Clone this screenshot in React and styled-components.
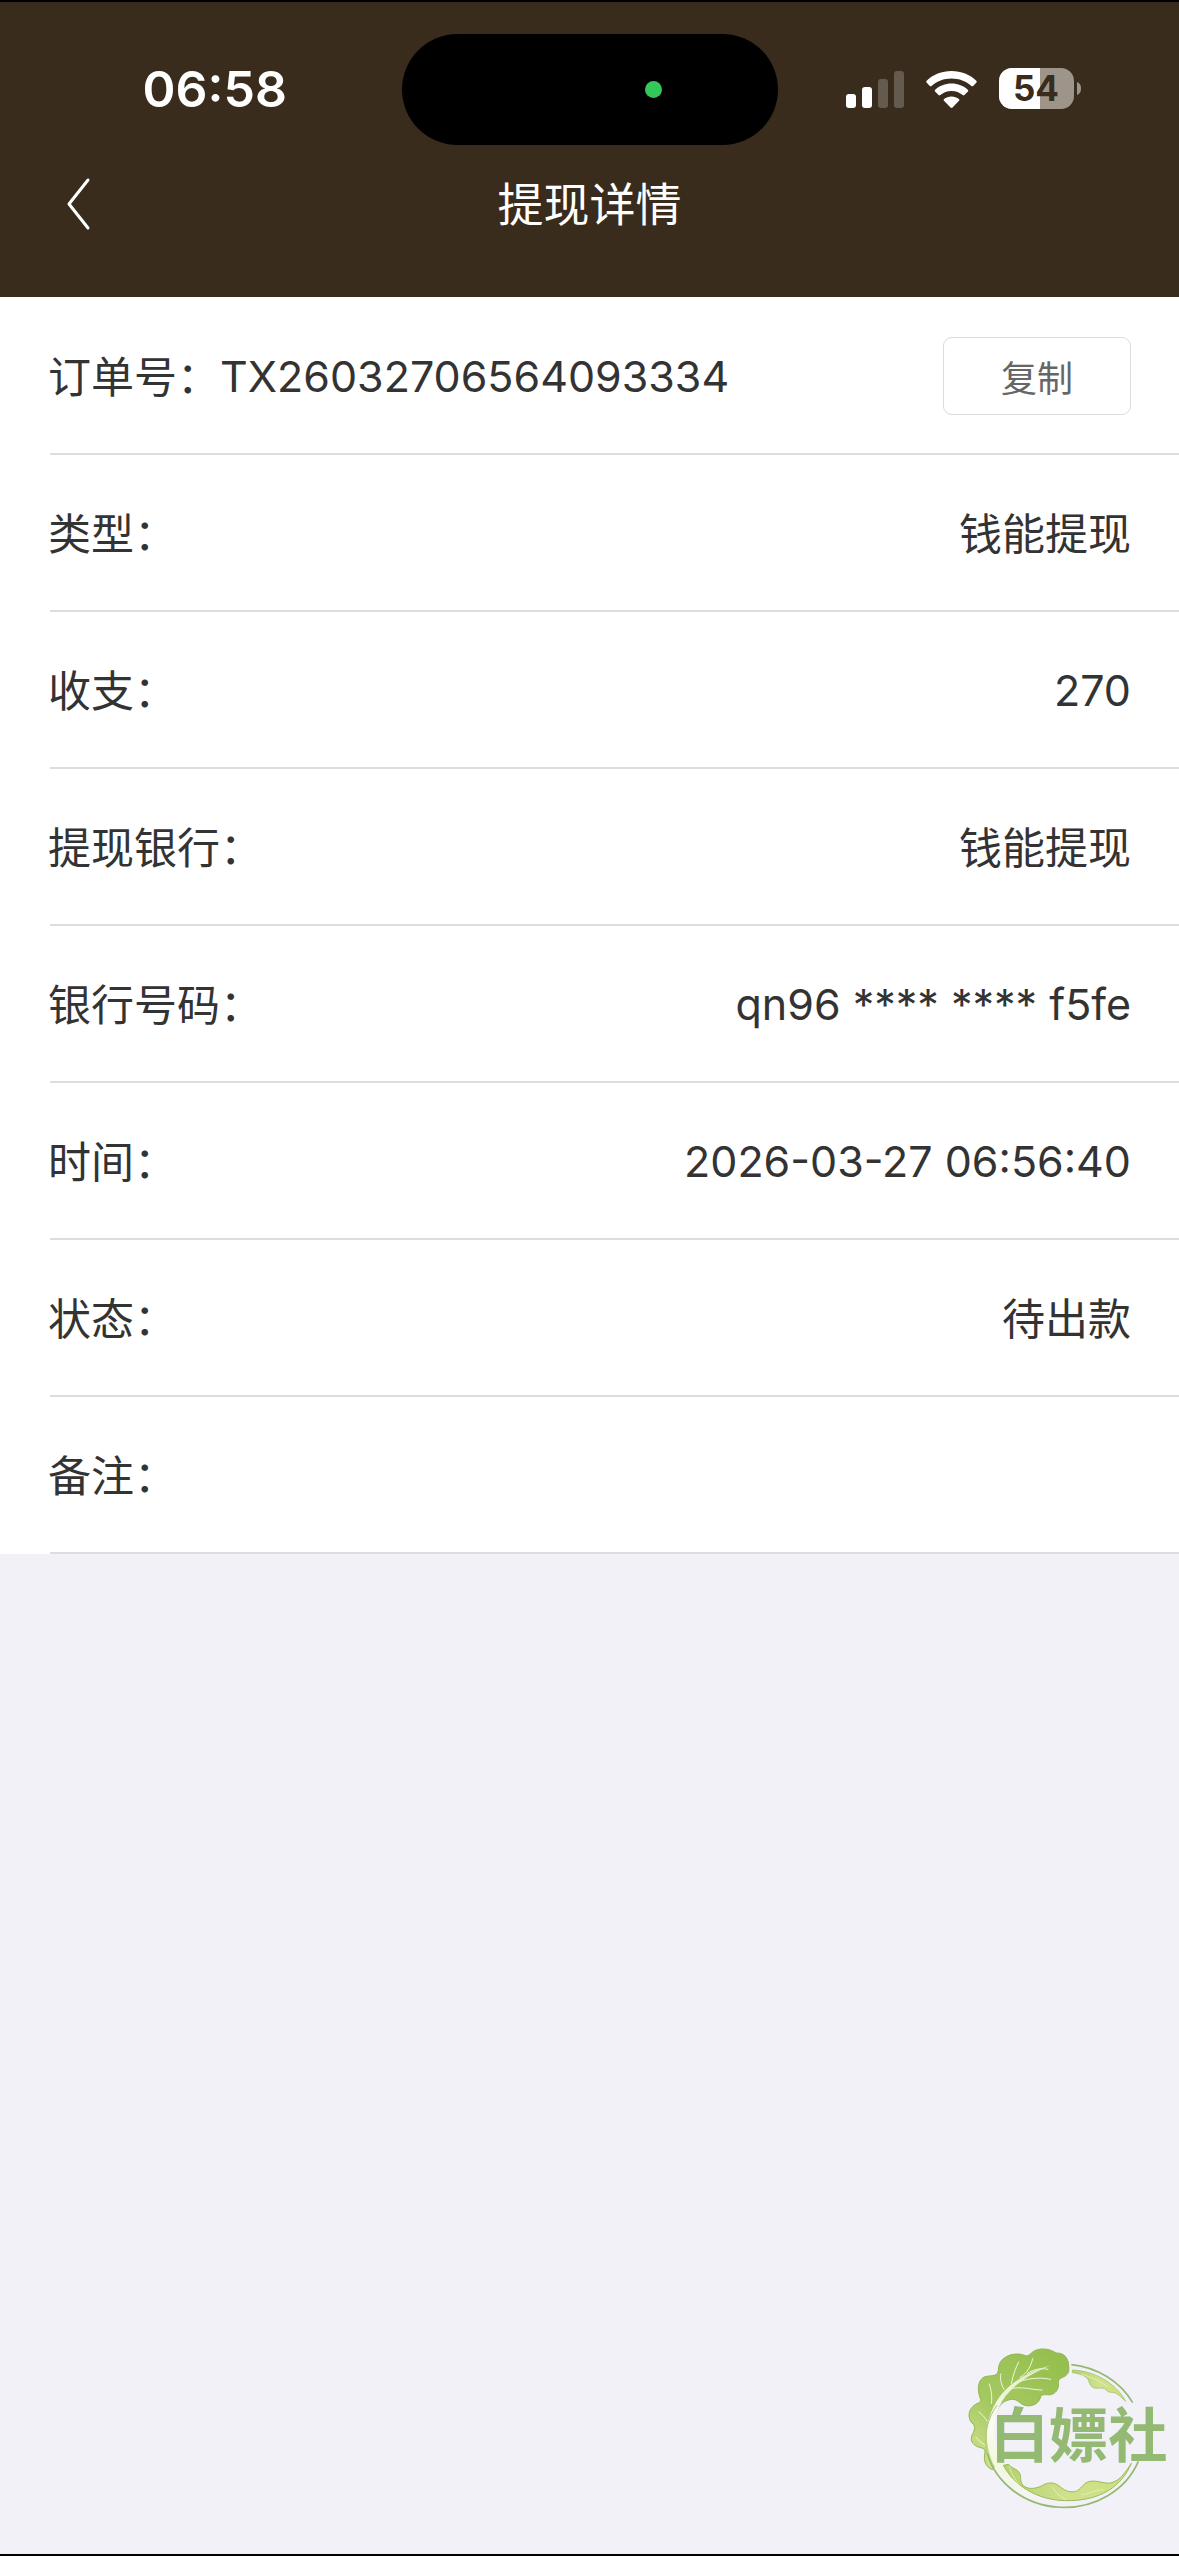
import React from 'react';
import styled, { createGlobalStyle } from 'styled-components';

const colors = {
  brown: '#3a2c1d',
  white: '#ffffff',
  text: '#333333',
  muted: '#666666',
  line: '#dddddd',
  page: '#f2f1f7',
  green: '#34c759',
  leaf: '#94b973',
};

const GlobalStyle = createGlobalStyle`
  * {
    box-sizing: border-box;
  }

  body {
    margin: 0;
    background: ${colors.page};
    color: ${colors.text};
    font-family: Inter, 'Noto Sans CJK SC', sans-serif;
  }
`;

const Page = styled.div`
  display: flex;
  flex-direction: column;
  min-height: 100vh;
  border-top: 2px solid #000;
  border-bottom: 2px solid #000;
`;

const Header = styled.header`
  background: ${colors.brown};
  color: ${colors.white};
  padding: 32px 0 35px;
`;

const StatusBar = styled.div`
  display: grid;
  grid-template-columns: 1fr 376px 1fr;
  align-items: center;
`;

const Time = styled.time`
  padding: 0 0 2px 28px;
  font-size: 50px;
  line-height: 60px;
  font-weight: 600;
  text-align: center;
`;

const Island = styled.div`
  display: flex;
  align-items: center;
  justify-content: flex-end;
  height: 111px;
  padding-right: 116px;
  border-radius: 56px;
  background: #000;
`;

const CameraDot = styled.span`
  width: 17px;
  height: 17px;
  border-radius: 50%;
  background: ${colors.green};
`;

const StatusIcons = styled.div`
  display: flex;
  align-items: center;
  justify-content: flex-end;
  gap: 22px;
  padding: 0 98px 2px 0;

  svg {
    display: block;
  }
`;

const NavBar = styled.nav`
  display: grid;
  grid-template-columns: 160px 1fr 160px;
  align-items: center;
  height: 117px;
`;

const BackButton = styled.button`
  display: flex;
  align-items: center;
  height: 100%;
  padding: 0 0 0 63px;
  border: 0;
  background: none;
  color: inherit;
`;

const Title = styled.h1`
  margin: 0;
  font-size: 46px;
  line-height: 60px;
  font-weight: 400;
  text-align: center;
`;

const List = styled.dl`
  margin: 0;
  padding-top: 1px;
  background: ${colors.white};
`;

const Row = styled.div`
  display: grid;
  grid-template-columns: auto 1fr auto;
  grid-template-rows: 155px 2px;
  align-items: center;
  padding-left: 48px;

  &::after {
    content: '';
    grid-column: 1 / -1;
    height: 2px;
    margin-left: 2px;
    background: ${colors.line};
  }
`;

const Label = styled.dt`
  padding-top: 2px;
  font-size: 43px;
  line-height: 60px;
`;

const Value = styled.dd`
  grid-column: ${({ $start }) => ($start ? 'auto' : 'span 2')};
  margin: 0;
  padding-top: ${({ $latin }) => ($latin ? 0 : 2)}px;
  padding-right: 48px;
  font-size: 43px;
  line-height: 60px;
  text-align: ${({ $start }) => ($start ? 'left' : 'right')};
`;

const Action = styled.dd`
  margin: 0;
  padding-right: 48px;
`;

const CopyButton = styled.button`
  display: block;
  width: 188px;
  height: 78px;
  padding: 0;
  border: 1px solid ${colors.line};
  border-radius: 9px;
  background: ${colors.white};
  color: ${colors.muted};
  font-family: inherit;
  font-size: 36px;
`;

const Stamp = styled.svg`
  position: fixed;
  right: 0;
  bottom: 2px;
  width: 239px;
  height: 234px;
  pointer-events: none;
`;

const BatteryText = styled.text`
  font-family: Inter, sans-serif;
  font-size: 35px;
  font-weight: 700;
  fill: ${colors.brown};
`;

const StampText = styled.text`
  font-family: 'Noto Sans CJK SC', sans-serif;
  font-size: 178px;
  font-weight: 700;
  fill: ${colors.leaf};
`;

const Signal = () => (
  <svg width="58" height="38" viewBox="0 0 58 38" fill="#fff">
    <rect x="0" y="24" width="10" height="14" rx="3" />
    <rect x="16" y="17" width="10" height="21" rx="3" />
    <rect x="32" y="9" width="10" height="29" rx="3" opacity="0.22" />
    <rect x="48" y="1" width="10" height="37" rx="3" opacity="0.22" />
  </svg>
);

const Wifi = () => (
  <svg width="51" height="38" viewBox="0 0 51 38" fill="#fff">
    <path d="M25.500 1C15.800 1 7 4.600 0.700 10.700c-.6.600-.6 1.300-.1 1.900l3.200 3.300c.5.500 1.200.5 1.800 0C10.900 11.200 17.900 8.500 25.500 8.500s14.600 2.700 19.900 7.400c.6.500 1.300.5 1.800 0l3.200-3.300c.5-.6.5-1.300-.1-1.900C44 4.600 35.200 1 25.500 1z" />
    <path d="M25.500 13.600c-6.300 0-12 2.300-16.300 6.200-.6.600-.6 1.300-.1 1.800l3.400 3.500c.5.500 1.200.5 1.800 0 3-2.700 6.900-4.200 11.200-4.200s8.200 1.500 11.200 4.200c.6.500 1.300.5 1.800 0l3.400-3.500c.5-.5.5-1.200-.1-1.800-4.300-3.900-10-6.200-16.300-6.200z" />
    <path d="M25.500 26.400c-2.800 0-5.400 1-7.400 2.600-.6.500-.6 1.200-.1 1.700l6.500 6.800c.6.600 1.400.6 2 0l6.500-6.800c.5-.5.5-1.200-.1-1.700-2-1.600-4.600-2.600-7.400-2.600z" />
  </svg>
);

const Battery = () => (
  <svg width="82" height="41" viewBox="0 0 82 41">
    <defs>
      <clipPath id="charge">
        <rect width="41" height="41" />
      </clipPath>
    </defs>
    <rect width="75" height="41" rx="13" fill="#9e958a" />
    <rect width="75" height="41" rx="13" fill="#fff" clipPath="url(#charge)" />
    <path d="M78 14c3 1 4 3.500 4 6.500s-1 5.500-4 6.500z" fill="#9e958a" />
    <BatteryText x="37" y="33" textAnchor="middle">
      54
    </BatteryText>
  </svg>
);

const Chevron = () => (
  <svg width="30" height="56" viewBox="0 0 30 56" fill="none" stroke="#fff" strokeWidth="3">
    <path d="M25 4L6 28l19 24" strokeLinecap="round" strokeLinejoin="round" />
  </svg>
);

const CabbageStamp = () => (
  <Stamp viewBox="0 0 717 702" role="img" aria-label="白嫖社">
    <defs>
      <linearGradient id="leafFill" x1="0.8" y1="0" x2="0.2" y2="1">
        <stop offset="0" stopColor="#94bf4e" />
        <stop offset="0.6" stopColor="#a5c962" />
        <stop offset="1" stopColor="#cfe08c" />
      </linearGradient>
      <linearGradient id="frillFill" x1="0" y1="0" x2="1" y2="0">
        <stop offset="0" stopColor="#b5d170" />
        <stop offset="0.5" stopColor="#cfe18b" />
        <stop offset="1" stopColor="#cbe07d" />
      </linearGradient>
      <linearGradient id="stemFill" x1="0" y1="0" x2="0" y2="1">
        <stop offset="0" stopColor="#dfeabf" />
        <stop offset="0.4" stopColor="#fbfcf5" />
        <stop offset="0.7" stopColor="#f3f8dc" />
        <stop offset="1" stopColor="#f5f4f2" />
      </linearGradient>
    </defs>

    <path
      d="M158 449C140 444 130 424 134 404C137 392 134 386 126 384C104 380 88 366 96 346C102 334 106 326 102 314C84 302 82 276 98 260C110 248 124 250 122 238C112 214 112 186 128 174C140 164 164 172 172 160C178 150 172 138 184 122C204 100 236 98 256 107C268 110 272 98 284 92C306 82 334 88 348 99C370 98 384 112 386 134C388 154 386 162 372 170C358 176 354 180 356 190C356 208 348 220 332 224C318 226 306 220 302 230C298 250 276 262 254 256C240 252 232 236 214 238C192 242 184 250 176 262C154 300 148 370 168 430Z"
      fill="url(#leafFill)"
      stroke="#8fb54f"
      strokeWidth="3"
    />
    <path
      d="M334 136C284 148 238 172 202 204C166 238 144 286 140 336C138 424 188 502 272 538C290 540 302 536 306 528C240 506 192 452 172 396C156 340 160 290 186 244C214 200 264 164 334 136Z"
      fill="url(#stemFill)"
    />
    <g fill="none" stroke="#f1f6da" strokeLinecap="round" strokeWidth="3">
      <path d="M214 190c6-26 12-44 22-64" />
      <path d="M240 172c22-12 34-36 38-56M262 160c20-14 44-16 62-12" />
      <path d="M224 190c32-14 72-20 108-12M210 206c34-8 68 4 96 4" />
      <path d="M192 208c-10-18-12-32-10-46M154 250c4-22-2-44-6-58" />
      <path d="M142 304c-8-12-16-22-26-28M136 376c-10-6-20-14-28-24" />
    </g>

    <path
      d="M397 150C463 152 529 190 557 244C541 230 531 216 513 217C499 218 500 204 486 204C474 204 458 208 452 196C446 188 448 178 436 170C424 162 410 160 397 158Z"
      fill="url(#frillFill)"
      stroke="#98ba5c"
      strokeWidth="2"
    />
    <path
      d="M190 436L206 433C212 446 230 444 238 458C246 470 238 480 246 492C258 510 286 508 308 496C328 484 346 488 360 500C376 514 396 520 412 512C428 502 430 488 450 484C476 480 496 494 516 488C542 480 558 454 574 430C546 498 482 544 376 542C290 540 222 496 190 436Z"
      fill="url(#frillFill)"
      stroke="#98ba5c"
      strokeWidth="3"
    />
    <g fill="none" stroke="#eef5cf" strokeLinecap="round" strokeWidth="2">
      <path d="M208 440c6 24 20 42 30 56M338 502c8 16 20 26 38 36M424 524c30-2 42-18 66-14M424 162c30 10 62 24 78 38" />
    </g>
    <g fill="none" stroke={colors.leaf} strokeWidth="5">
      <path d="M394 134a238 215 0 0 1 184 114" />
      <path d="M142 400a238 215 0 0 0 453 24" />
    </g>
    <path d="M141 400c-10-52 0-104 30-144" fill="none" stroke="#a9c783" strokeWidth="3" />
    <StampText x="416" y="410" textAnchor="middle">
      白嫖社
    </StampText>
  </Stamp>
);

const details = [
  { label: '类型：', value: '钱能提现' },
  { label: '收支：', value: '270', latin: true },
  { label: '提现银行：', value: '钱能提现' },
  { label: '银行号码：', value: 'qn96 **** **** f5fe', latin: true },
  { label: '时间：', value: '2026-03-27 06:56:40', latin: true },
  { label: '状态：', value: '待出款' },
  { label: '备注：', value: '' },
];

const App = () => (
  <Page>
    <GlobalStyle />
    <Header>
      <StatusBar>
        <Time>06:58</Time>
        <Island>
          <CameraDot />
        </Island>
        <StatusIcons>
          <Signal />
          <Wifi />
          <Battery />
        </StatusIcons>
      </StatusBar>
      <NavBar>
        <BackButton type="button" aria-label="返回">
          <Chevron />
        </BackButton>
        <Title>提现详情</Title>
      </NavBar>
    </Header>
    <main>
      <List>
        <Row>
          <Label>订单号：</Label>
          <Value $start $latin>
            TX26032706564093334
          </Value>
          <Action>
            <CopyButton type="button">复制</CopyButton>
          </Action>
        </Row>
        {details.map(({ label, value, latin }) => (
          <Row key={label}>
            <Label>{label}</Label>
            <Value $latin={latin}>{value}</Value>
          </Row>
        ))}
      </List>
    </main>
    <CabbageStamp />
  </Page>
);

export default App;
